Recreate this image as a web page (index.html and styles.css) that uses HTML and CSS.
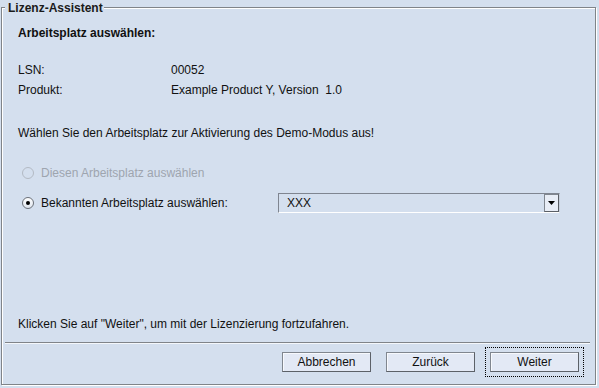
FILE: index.html
```html
<!DOCTYPE html>
<html lang="de">
<head>
<meta charset="utf-8">
<title>Lizenz-Assistent</title>
<link rel="stylesheet" href="styles.css">
</head>
<body>
<div class="frame">
  <div class="legend">Lizenz-Assistent</div>
  <div class="content">
    <div class="heading">Arbeitsplatz auswählen:</div>
    <div class="info">
      <div class="info-row"><span class="label">LSN:</span><span>00052</span></div>
      <div class="info-row"><span class="label">Produkt:</span><span>Example Product Y, Version&nbsp; 1.0</span></div>
    </div>
    <div class="prompt">Wählen Sie den Arbeitsplatz zur Aktivierung des Demo-Modus aus!</div>
    <div class="radio-row disabled">
      <span class="radio"></span><span class="radio-label">Diesen Arbeitsplatz auswählen</span>
    </div>
    <div class="radio-row second">
      <div class="radio-cell"><span class="radio checked"></span><span class="radio-label">Bekannten Arbeitsplatz auswählen:</span></div>
      <div class="combo">
        <span class="combo-text">XXX</span>
        <span class="combo-btn"><svg width="7" height="4" viewBox="0 0 7 4"><path d="M0 0H7L3.5 4Z" fill="#000"/></svg></span>
      </div>
    </div>
    <div class="spacer"></div>
    <div class="hint">Klicken Sie auf "Weiter", um mit der Lizenzierung fortzufahren.</div>
  </div>
  <div class="separator"></div>
  <div class="buttons">
    <button class="btn">Abbrechen</button>
    <button class="btn">Zurück</button>
    <button class="btn focus">Weiter</button>
  </div>
</div>
</body>
</html>
```
FILE: styles.css
```css
html, body {
  margin: 0;
  padding: 0;
}
body {
  width: 599px;
  height: 388px;
  background: #d4dfee;
  font-family: "Liberation Sans", Arial, sans-serif;
  font-size: 12px;
  color: #111;
  overflow: hidden;
}
.frame {
  position: relative;
  box-sizing: border-box;
  margin: 7px 3px 0 1px;
  width: 595px;
  height: 378px;
  border: 1px solid #808489;
  box-shadow: 1px 1px 0 #fff, inset 1px 1px 0 #fff;
  display: flex;
  flex-direction: column;
}
.legend {
  position: absolute;
  left: 3px;
  top: -7px;
  padding: 0 1px 0 3px;
  background: #d4dfee;
  font-weight: bold;
  line-height: 14px;
  color: #1a1a1a;
}
.content {
  flex: 1;
  display: flex;
  flex-direction: column;
  padding: 17px 16px 0 16px;
  line-height: 16px;
}
.heading {
  font-weight: bold;
}
.info {
  margin-top: 21px;
  display: flex;
  flex-direction: column;
  gap: 4px;
}
.info-row {
  display: flex;
}
.label {
  width: 153px;
}
.prompt {
  margin-top: 27px;
}
.radio-row {
  margin-top: 22px;
  height: 20px;
  display: flex;
  align-items: center;
}
.radio-row.second {
  margin-top: 10px;
}
.radio-cell {
  width: 260px;
  display: flex;
  align-items: center;
}
.radio {
  box-sizing: border-box;
  width: 12px;
  height: 12px;
  margin-left: 4px;
  margin-right: 7px;
  border: 1px solid #6b7078;
  border-radius: 50%;
  background: linear-gradient(#ffffff, #dfe5ee);
  display: flex;
  align-items: center;
  justify-content: center;
}
.radio.checked::after {
  content: "";
  width: 4px;
  height: 4px;
  border-radius: 50%;
  background: #000;
}
.disabled .radio {
  border-color: #b3bac4;
  background: #d4dfee;
}
.disabled .radio-label {
  color: #9ea5af;
}
.combo {
  box-sizing: border-box;
  width: 282px;
  height: 20px;
  border: 1px solid #7f8590;
  border-right-color: #c8d0dc;
  border-bottom-color: #fff;
  display: flex;
  align-items: center;
  justify-content: space-between;
}
.combo-text {
  padding-left: 8px;
}
.combo-btn {
  box-sizing: border-box;
  width: 15px;
  height: 18px;
  border: 1px solid #80868f;
  border-right-color: #5a5f66;
  border-bottom-color: #5a5f66;
  background: #e8edf6;
  display: flex;
  align-items: center;
  justify-content: center;
}
.spacer {
  flex: 1;
}
.hint {
  margin-bottom: 10px;
}
.separator {
  height: 1px;
  margin: 0 5px 0 3px;
  background: #808489;
  border-bottom: 1px solid #f4f7fb;
}
.buttons {
  display: flex;
  justify-content: flex-end;
  gap: 15px;
  padding: 8px 16px 12px 0;
}
.btn {
  box-sizing: border-box;
  width: 89px;
  height: 20px;
  padding: 0;
  font-family: "Liberation Sans", Arial, sans-serif;
  font-size: 12px;
  color: #111;
  background: #e3e9f5;
  border: 1px solid #80868f;
  border-right-color: #5c6168;
  border-bottom-color: #5c6168;
  box-shadow: inset 1px 1px 0 #f7f9fd;
}
.btn.focus {
  outline: 1px dotted #000;
  outline-offset: 4px;
}
```
